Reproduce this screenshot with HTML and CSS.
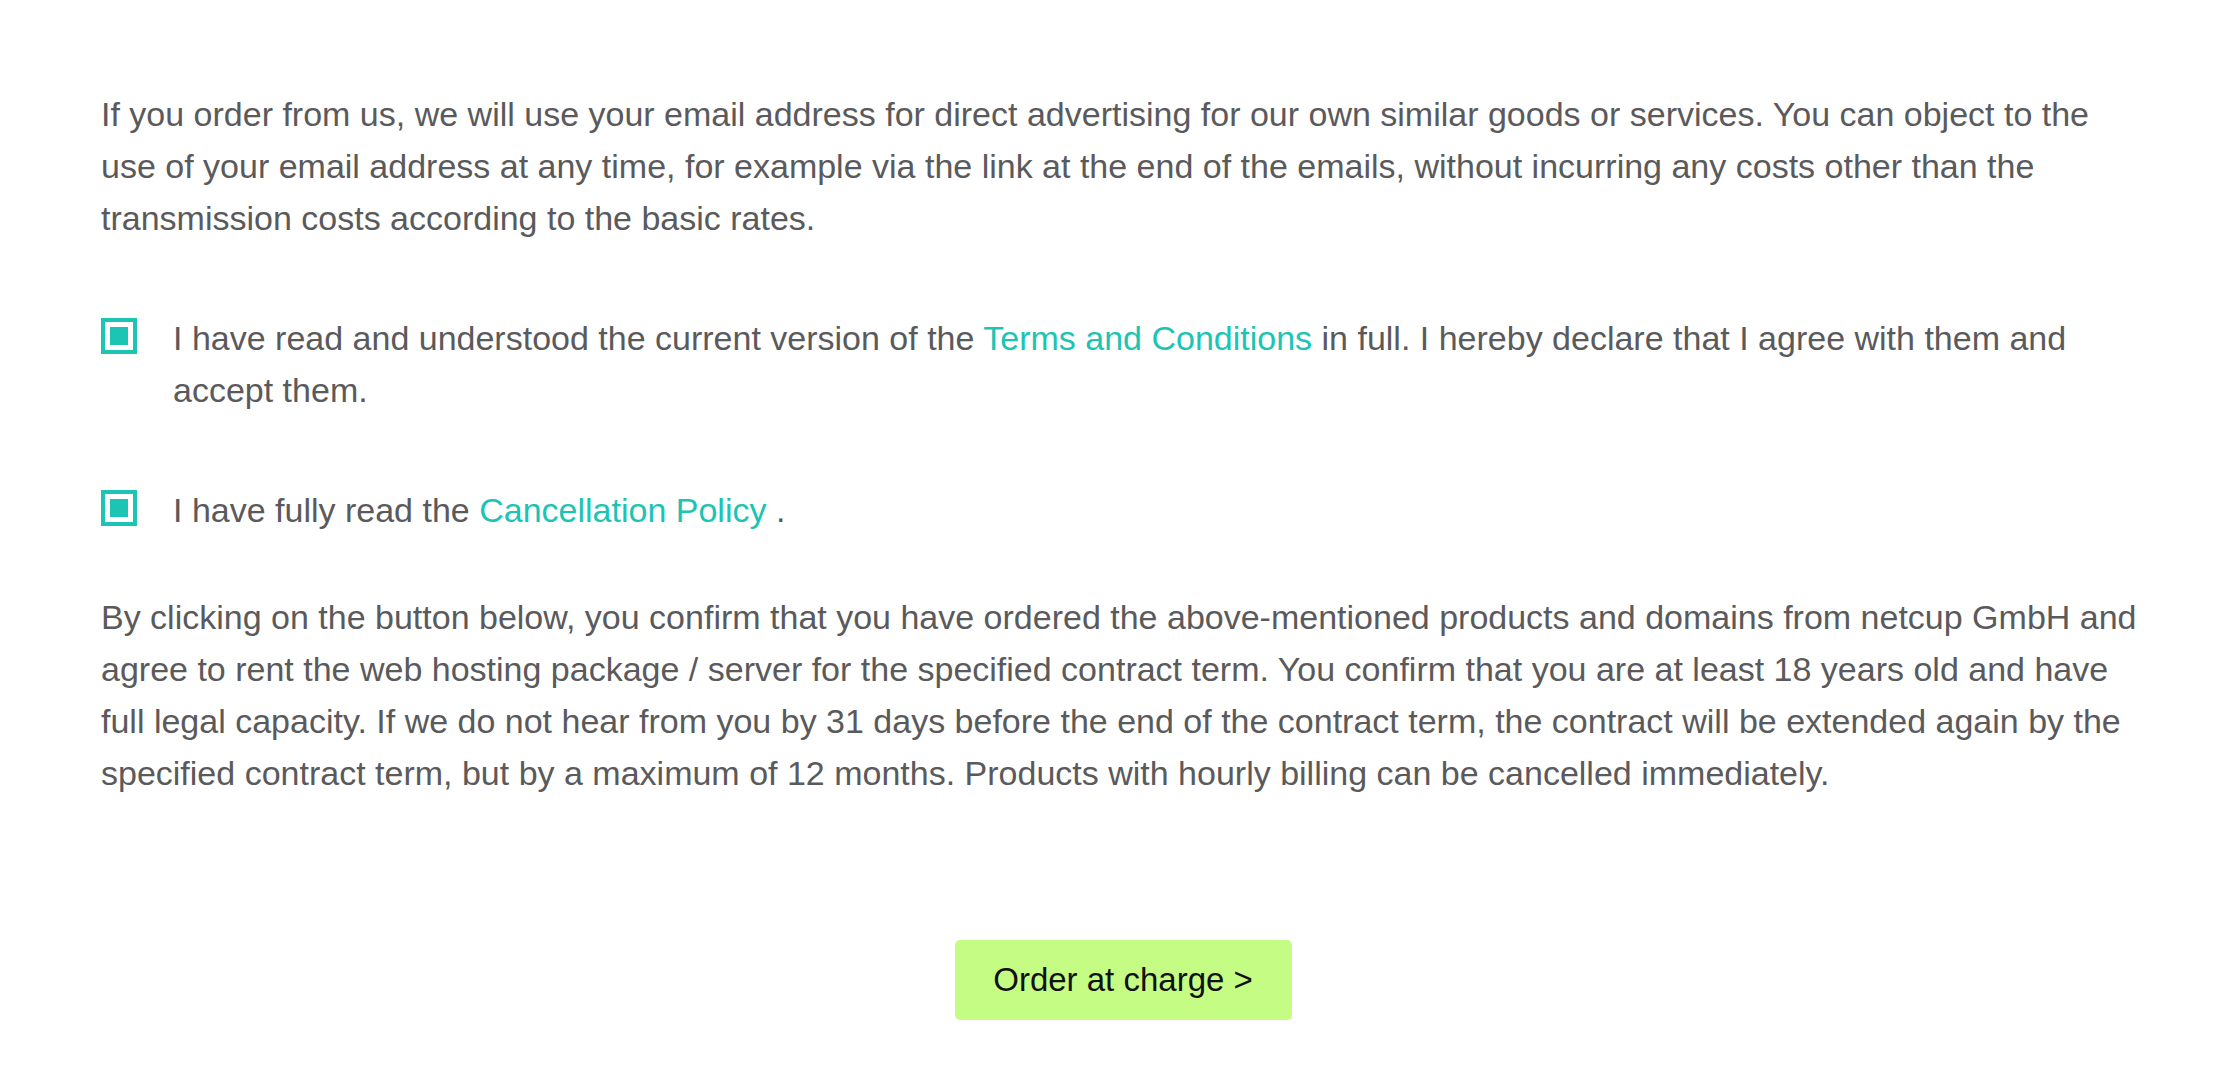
FILE: index.html
```html
<!DOCTYPE html>
<html lang="en">
<head>
<meta charset="utf-8">
<title>Order confirmation</title>
<link rel="stylesheet" href="styles.css">
</head>
<body>
<main class="content">
  <p class="para para-intro">If you order from us, we will use your email address for direct advertising for our own similar goods or services. You can object to the use of your email address at any time, for example via the link at the end of the emails, without incurring any costs other than the transmission costs according to the basic rates.</p>

  <label class="check-row check-row-first">
    <span class="checkbox"><span class="checkbox-mark"></span></span>
    <span class="check-text">I have read and understood the current version of the <a class="link" href="#">Terms and Conditions</a> in full. I hereby declare that I agree with them and accept them.</span>
  </label>

  <label class="check-row check-row-second">
    <span class="checkbox"><span class="checkbox-mark"></span></span>
    <span class="check-text">I have fully read the <a class="link" href="#">Cancellation Policy</a> .</span>
  </label>

  <p class="para para-confirm">By clicking on the button below, you confirm that you have ordered the above-mentioned products and domains from netcup GmbH and agree to rent the web hosting package / server for the specified contract term. You confirm that you are at least 18 years old and have full legal capacity. If we do not hear from you by 31 days before the end of the contract term, the contract will be extended again by the specified contract term, but by a maximum of 12 months. Products with hourly billing can be cancelled immediately.</p>

  <div class="actions">
    <button class="order-button" type="button">Order at charge &gt;</button>
  </div>
</main>
</body>
</html>
```

FILE: styles.css
```css
html, body {
  margin: 0;
  padding: 0;
  background: #ffffff;
}

body {
  font-family: "Liberation Sans", Arial, sans-serif;
  font-size: 34px;
  line-height: 52px;
  color: #5a5a5c;
}

.content {
  box-sizing: border-box;
  width: 2238px;
  padding: 88px 93px 0 101px;
  display: flex;
  flex-direction: column;
}

.para {
  margin: 0;
}

.check-row {
  display: flex;
  align-items: flex-start;
  gap: 36px;
  cursor: pointer;
}

.check-row-first {
  margin-top: 68px;
}

.check-row-second {
  margin-top: 68px;
}

.para-confirm {
  margin-top: 55px;
}

.checkbox {
  flex: 0 0 auto;
  box-sizing: border-box;
  width: 36px;
  height: 36px;
  margin-top: 6px;
  border: 4px solid #1cc4b4;
  background: #ffffff;
  display: flex;
  align-items: center;
  justify-content: center;
}

.checkbox-mark {
  width: 18px;
  height: 18px;
  background: #1cc4b4;
}

.check-text {
  flex: 1 1 auto;
}

.link {
  color: #1cc4b4;
  text-decoration: none;
}

.actions {
  display: flex;
  justify-content: center;
  margin-top: 141px;
}

.order-button {
  width: 337px;
  height: 80px;
  border: none;
  border-radius: 5px;
  background: #c4fc84;
  color: #111111;
  font-family: inherit;
  font-size: 33px;
  cursor: pointer;
}
```
